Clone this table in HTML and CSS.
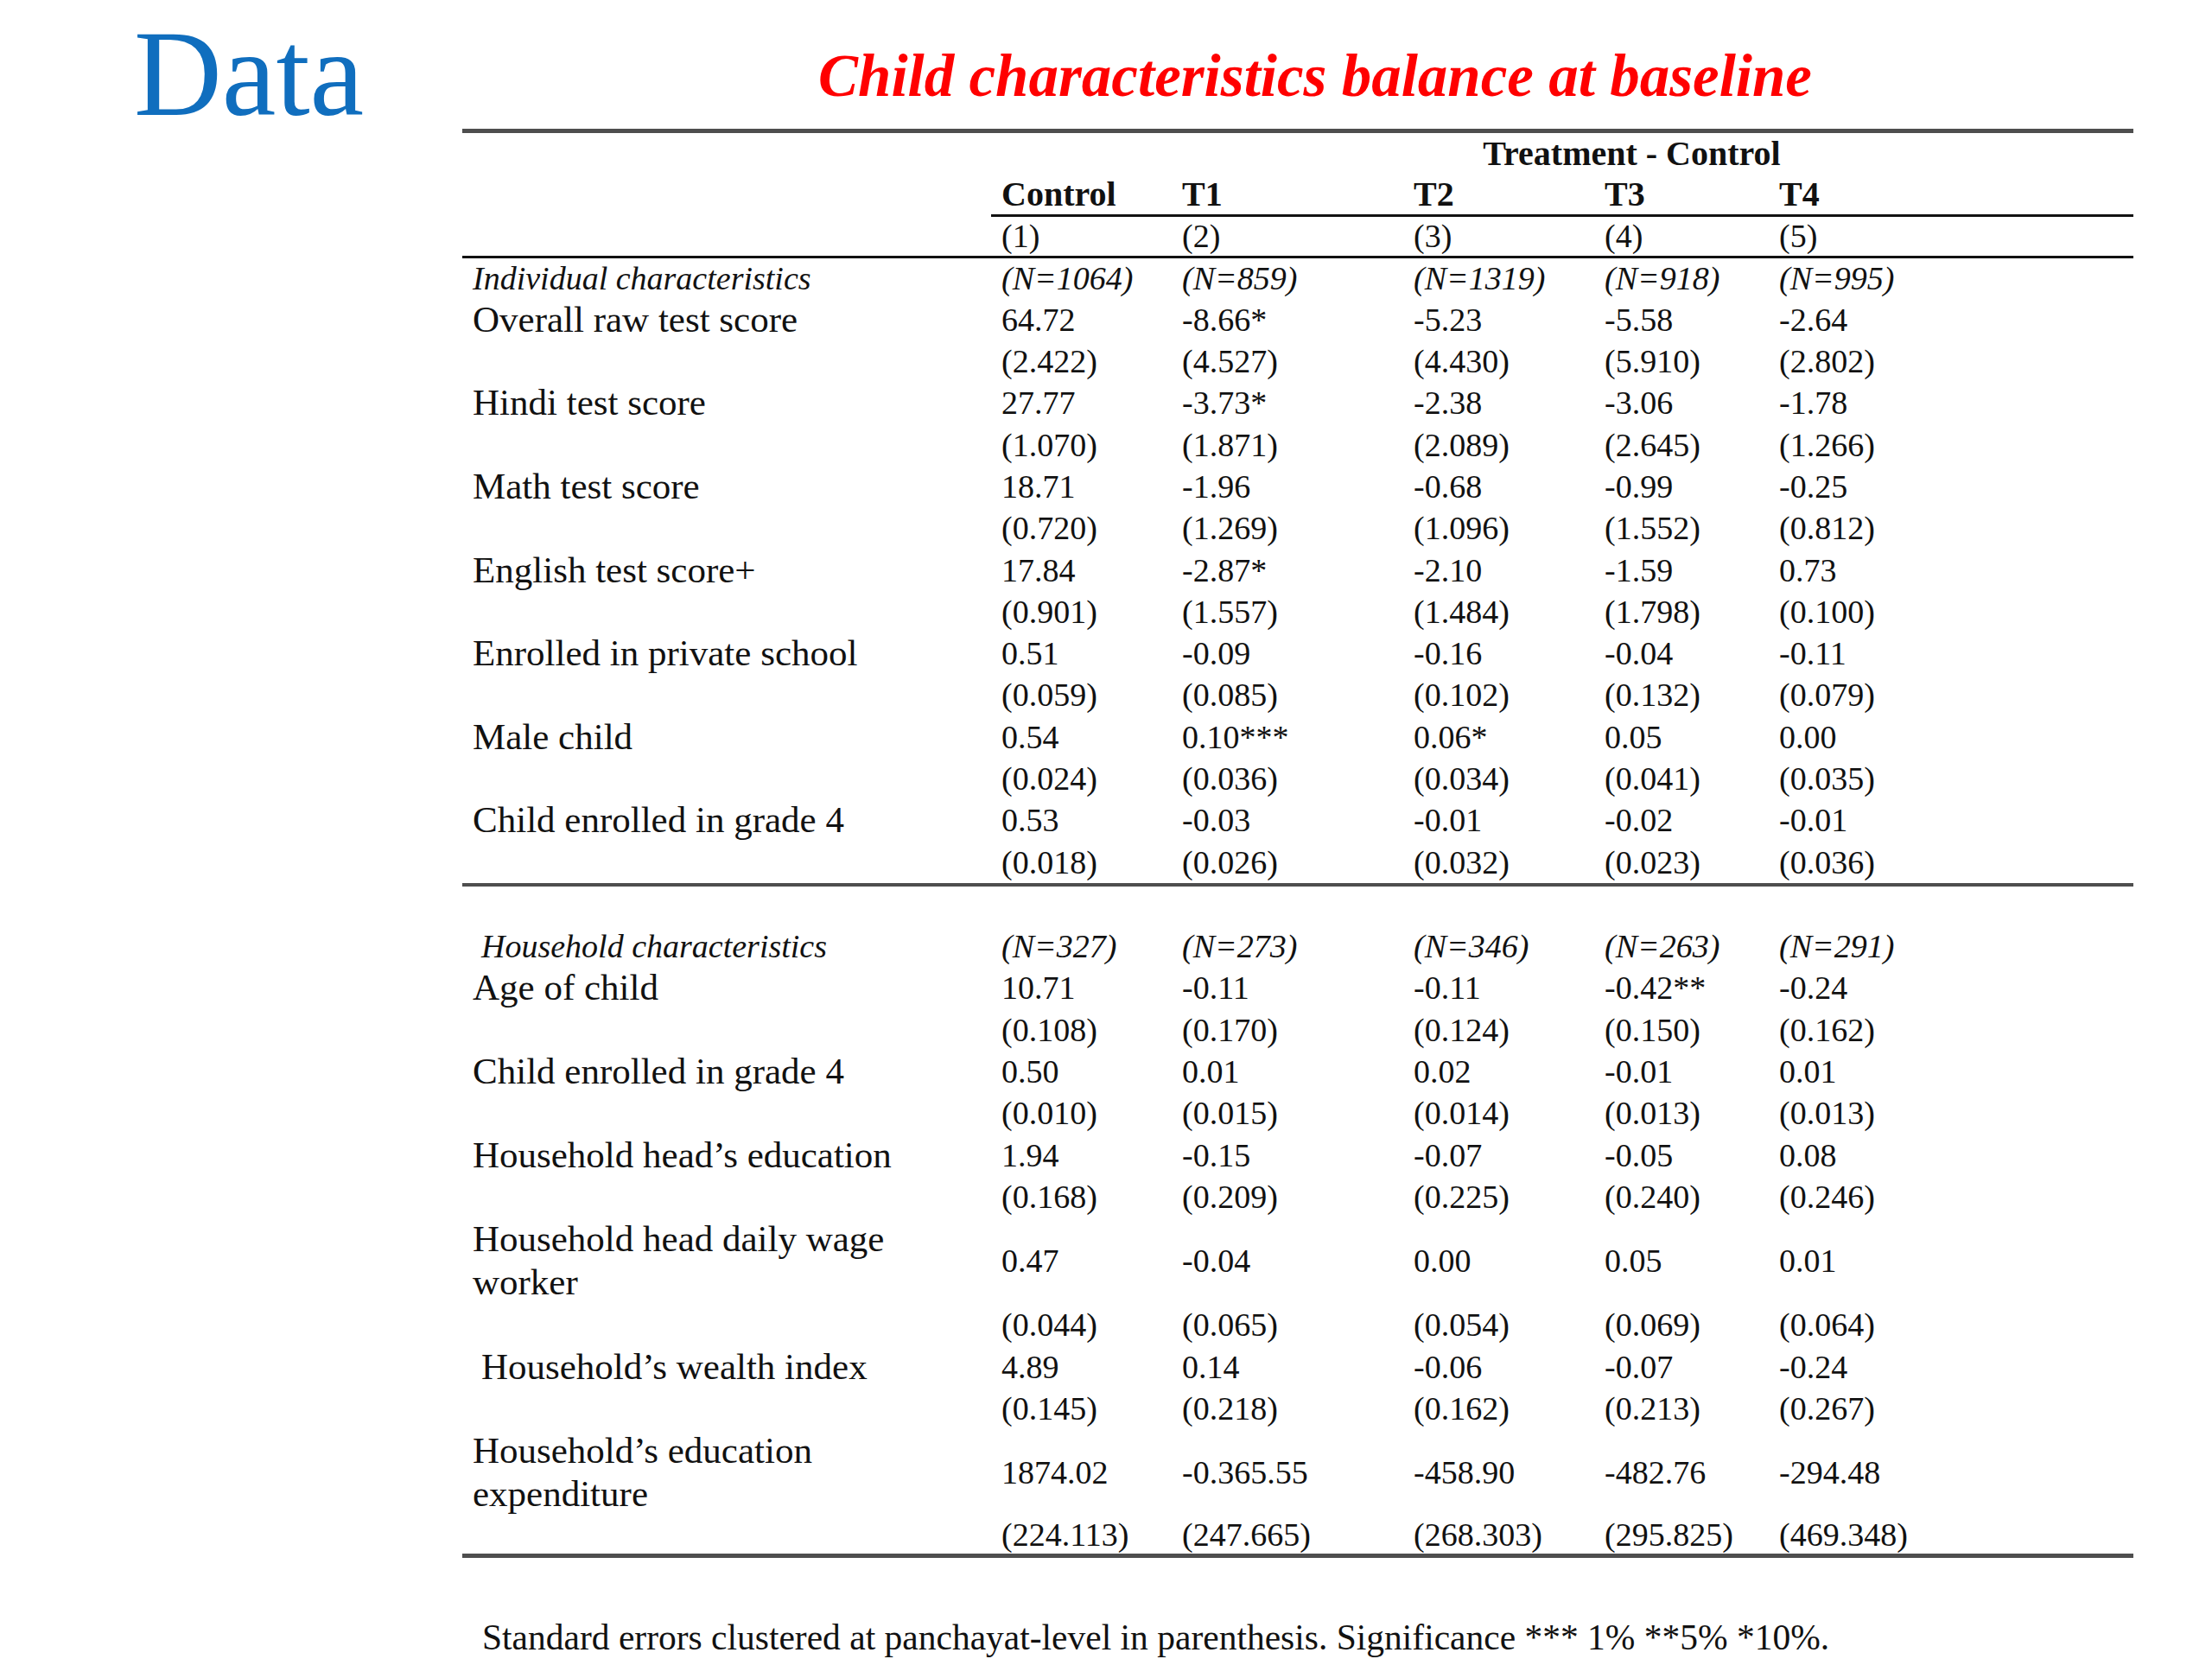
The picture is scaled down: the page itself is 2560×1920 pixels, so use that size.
FILE: index.html
```html
<!DOCTYPE html>
<html lang="en">
<head>
<meta charset="utf-8">
<title>Data – Child characteristics balance at baseline</title>
<link rel="stylesheet" href="styles.css">
</head>
<body>
<div class="slide">
  <h1 class="section">Data</h1>
  <h2 class="title">Child characteristics balance at baseline</h2>
  <table class="balance">
    <colgroup>
      <col class="c-lab"><col class="c-ctl"><col class="c-t1"><col class="c-t2"><col class="c-t3"><col class="c-t4">
    </colgroup>
    <thead>
      <tr class="r-top">
        <th></th><th></th>
        <th colspan="4" class="span">Treatment - Control</th>
      </tr>
      <tr class="r-heads">
        <th></th>
        <th class="ul">Control</th><th class="ul">T1</th><th class="ul">T2</th><th class="ul">T3</th><th class="ul">T4</th>
      </tr>
      <tr class="r-nums">
        <td></td><td>(1)</td><td>(2)</td><td>(3)</td><td>(4)</td><td>(5)</td>
      </tr>
    </thead>
    <tbody>
      <tr class="grp first"><td class="lab">Individual characteristics</td><td>(N=1064)</td><td>(N=859)</td><td>(N=1319)</td><td>(N=918)</td><td>(N=995)</td></tr>
      <tr><td class="lab">Overall raw test score</td><td>64.72</td><td>-8.66*</td><td>-5.23</td><td>-5.58</td><td>-2.64</td></tr>
      <tr><td class="lab"></td><td>(2.422)</td><td>(4.527)</td><td>(4.430)</td><td>(5.910)</td><td>(2.802)</td></tr>
      <tr><td class="lab">Hindi test score</td><td>27.77</td><td>-3.73*</td><td>-2.38</td><td>-3.06</td><td>-1.78</td></tr>
      <tr><td class="lab"></td><td>(1.070)</td><td>(1.871)</td><td>(2.089)</td><td>(2.645)</td><td>(1.266)</td></tr>
      <tr><td class="lab">Math test score</td><td>18.71</td><td>-1.96</td><td>-0.68</td><td>-0.99</td><td>-0.25</td></tr>
      <tr><td class="lab"></td><td>(0.720)</td><td>(1.269)</td><td>(1.096)</td><td>(1.552)</td><td>(0.812)</td></tr>
      <tr><td class="lab">English test score+</td><td>17.84</td><td>-2.87*</td><td>-2.10</td><td>-1.59</td><td>0.73</td></tr>
      <tr><td class="lab"></td><td>(0.901)</td><td>(1.557)</td><td>(1.484)</td><td>(1.798)</td><td>(0.100)</td></tr>
      <tr><td class="lab">Enrolled in private school</td><td>0.51</td><td>-0.09</td><td>-0.16</td><td>-0.04</td><td>-0.11</td></tr>
      <tr><td class="lab"></td><td>(0.059)</td><td>(0.085)</td><td>(0.102)</td><td>(0.132)</td><td>(0.079)</td></tr>
      <tr><td class="lab">Male child</td><td>0.54</td><td>0.10***</td><td>0.06*</td><td>0.05</td><td>0.00</td></tr>
      <tr><td class="lab"></td><td>(0.024)</td><td>(0.036)</td><td>(0.034)</td><td>(0.041)</td><td>(0.035)</td></tr>
      <tr><td class="lab">Child enrolled in grade 4</td><td>0.53</td><td>-0.03</td><td>-0.01</td><td>-0.02</td><td>-0.01</td></tr>
      <tr class="sec-end"><td class="lab"></td><td>(0.018)</td><td>(0.026)</td><td>(0.032)</td><td>(0.023)</td><td>(0.036)</td></tr>
      <tr class="spacer"><td colspan="6"></td></tr>
      <tr class="grp"><td class="lab ind">Household characteristics</td><td>(N=327)</td><td>(N=273)</td><td>(N=346)</td><td>(N=263)</td><td>(N=291)</td></tr>
      <tr><td class="lab">Age of child</td><td>10.71</td><td>-0.11</td><td>-0.11</td><td>-0.42**</td><td>-0.24</td></tr>
      <tr><td class="lab"></td><td>(0.108)</td><td>(0.170)</td><td>(0.124)</td><td>(0.150)</td><td>(0.162)</td></tr>
      <tr><td class="lab">Child enrolled in grade 4</td><td>0.50</td><td>0.01</td><td>0.02</td><td>-0.01</td><td>0.01</td></tr>
      <tr><td class="lab"></td><td>(0.010)</td><td>(0.015)</td><td>(0.014)</td><td>(0.013)</td><td>(0.013)</td></tr>
      <tr><td class="lab">Household head’s education</td><td>1.94</td><td>-0.15</td><td>-0.07</td><td>-0.05</td><td>0.08</td></tr>
      <tr><td class="lab"></td><td>(0.168)</td><td>(0.209)</td><td>(0.225)</td><td>(0.240)</td><td>(0.246)</td></tr>
      <tr class="two"><td class="lab">Household head daily wage<br>worker</td><td>0.47</td><td>-0.04</td><td>0.00</td><td>0.05</td><td>0.01</td></tr>
      <tr><td class="lab"></td><td>(0.044)</td><td>(0.065)</td><td>(0.054)</td><td>(0.069)</td><td>(0.064)</td></tr>
      <tr><td class="lab ind">Household’s wealth index</td><td>4.89</td><td>0.14</td><td>-0.06</td><td>-0.07</td><td>-0.24</td></tr>
      <tr><td class="lab"></td><td>(0.145)</td><td>(0.218)</td><td>(0.162)</td><td>(0.213)</td><td>(0.267)</td></tr>
      <tr class="two"><td class="lab">Household’s education<br>expenditure</td><td>1874.02</td><td>-0.365.55</td><td>-458.90</td><td>-482.76</td><td>-294.48</td></tr>
      <tr class="last"><td class="lab"></td><td>(224.113)</td><td>(247.665)</td><td>(268.303)</td><td>(295.825)</td><td>(469.348)</td></tr>
    </tbody>
  </table>
  <p class="note">Standard errors clustered at panchayat-level in parenthesis. Significance *** 1% **5% *10%.</p>
</div>
</body>
</html>
```

FILE: styles.css
```css
html, body {
  margin: 0;
  padding: 0;
  background: #ffffff;
}

body {
  font-family: "Liberation Serif", "Times New Roman", serif;
  color: #111111;
}

.slide {
  display: grid;
  grid-template-columns: 535px 1934px;
  width: 2560px;
  height: 1920px;
  overflow: hidden;
}

.section {
  grid-column: 1;
  grid-row: 1 / span 3;
  margin: 15px 0 0 155px;
  font-family: "Liberation Serif", serif;
  font-weight: normal;
  font-size: 141px;
  line-height: 141px;
  color: #106ebe;
  align-self: start;
}

.title {
  grid-column: 2;
  grid-row: 1;
  margin: 54px 0 25px 0;
  padding-left: 40px;
  text-align: center;
  font-family: "Liberation Serif", serif;
  font-style: italic;
  font-weight: bold;
  font-size: 69px;
  line-height: 69px;
  color: #ff0000;
}

.balance {
  grid-column: 2;
  grid-row: 2;
  width: 1934px;
  table-layout: fixed;
  border-collapse: separate;
  border-spacing: 0;
  font-family: "Liberation Serif", serif;
  color: #111111;
}

.c-lab { width: 612px; }
.c-ctl { width: 209px; }
.c-t1 { width: 268px; }
.c-t2 { width: 221px; }
.c-t3 { width: 202px; }
.c-t4 { width: 422px; }

.balance th,
.balance td {
  padding: 0 0 0 12px;
  text-align: left;
  vertical-align: middle;
  white-space: nowrap;
  font-size: 38px;
  font-weight: normal;
  line-height: 48.3px;
}

.balance th {
  font-weight: bold;
  font-size: 40px;
}

.r-top th {
  border-top: 5px solid #4e4e4e;
  line-height: 48px;
}

.r-top .span {
  text-align: center;
  padding-right: 60px;
}

.r-heads th {
  line-height: 46px;
}

.r-heads .ul {
  border-bottom: 3px solid #111111;
}

.r-nums td {
  line-height: 45px;
  border-bottom: 3px solid #111111;
}

.balance .lab {
  font-size: 43px;
}

.balance .lab.ind {
  padding-left: 22px;
}

.grp td {
  font-style: italic;
  font-size: 38px;
}

.balance .grp .lab {
  font-size: 38px;
}

.grp.first td {
  line-height: 47px;
}

.sec-end td {
  border-bottom: 4px solid #4e4e4e;
}

.spacer td {
  height: 45px;
  line-height: 45px;
  padding: 0;
}

.two .lab {
  line-height: 50px;
}

.last td {
  line-height: 44px;
  border-bottom: 5px solid #4e4e4e;
}

.note {
  grid-column: 2;
  grid-row: 3;
  margin: 68px 0 0 0;
  padding-left: 23px;
  font-family: "Liberation Serif", serif;
  font-size: 41.5px;
  line-height: 48px;
  color: #111111;
  white-space: nowrap;
}
```
